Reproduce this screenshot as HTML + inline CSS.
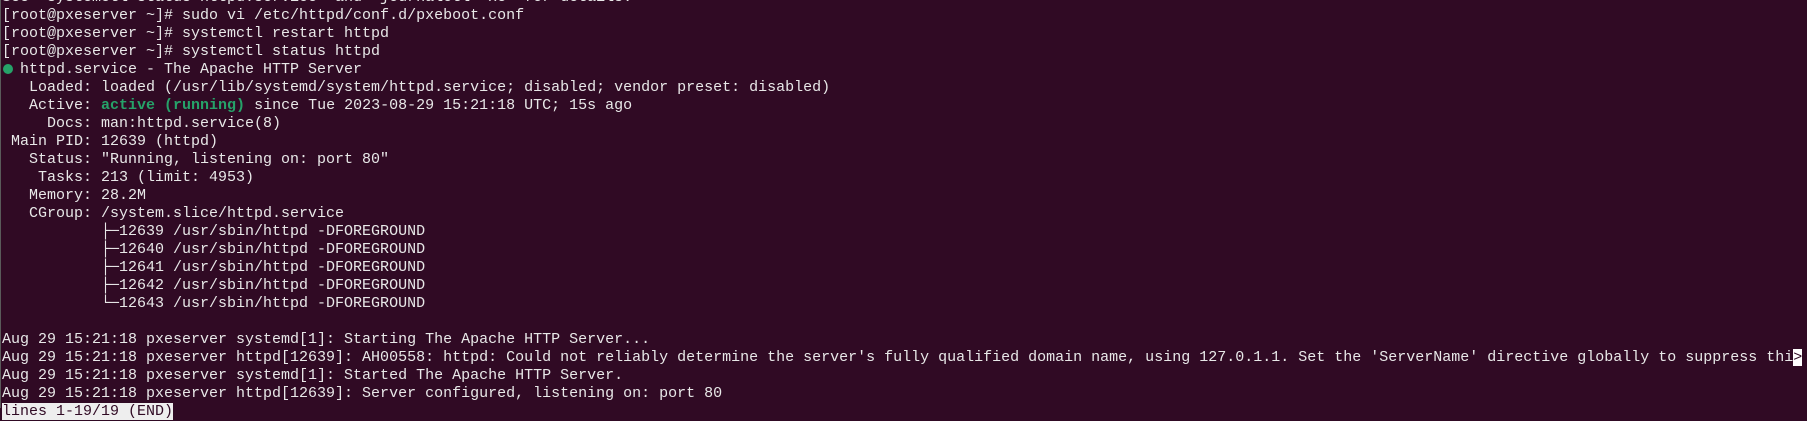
<!DOCTYPE html>
<html><head><meta charset="utf-8"><style>
html,body{margin:0;padding:0;background:#300a24;width:1807px;height:408px;overflow:hidden}
body{border-left:1px solid #5a5a5a;box-sizing:border-box}
pre{margin:0;position:absolute;left:2px;top:-11px;font-family:"Liberation Mono","DejaVu Sans Mono",monospace;font-size:15px;line-height:18px;color:#e8e8e8;white-space:pre}
.g{color:#26a269;font-weight:bold}
.dot{display:inline-block;width:10px;height:10px;border-radius:50%;background:#26a269;margin-left:1px;margin-right:-2px;vertical-align:-1px}
.cur{background:#fff;color:#300a24}
.hl{background:#eeeeee;color:#300a24}
</style></head><body><pre>See 'systemctl status httpd.service' and 'journalctl -xe' for details.
[root@pxeserver ~]# sudo vi /etc/httpd/conf.d/pxeboot.conf
[root@pxeserver ~]# systemctl restart httpd
[root@pxeserver ~]# systemctl status httpd
<span class="dot"></span> httpd.service - The Apache HTTP Server
   Loaded: loaded (/usr/lib/systemd/system/httpd.service; disabled; vendor preset: disabled)
   Active: <span class="g">active (running)</span> since Tue 2023-08-29 15:21:18 UTC; 15s ago
     Docs: man:httpd.service(8)
 Main PID: 12639 (httpd)
   Status: "Running, listening on: port 80"
    Tasks: 213 (limit: 4953)
   Memory: 28.2M
   CGroup: /system.slice/httpd.service
           ├─12639 /usr/sbin/httpd -DFOREGROUND
           ├─12640 /usr/sbin/httpd -DFOREGROUND
           ├─12641 /usr/sbin/httpd -DFOREGROUND
           ├─12642 /usr/sbin/httpd -DFOREGROUND
           └─12643 /usr/sbin/httpd -DFOREGROUND

Aug 29 15:21:18 pxeserver systemd[1]: Starting The Apache HTTP Server...
Aug 29 15:21:18 pxeserver httpd[12639]: AH00558: httpd: Could not reliably determine the server's fully qualified domain name, using 127.0.1.1. Set the 'ServerName' directive globally to suppress thi<span class="cur">&gt;</span>
Aug 29 15:21:18 pxeserver systemd[1]: Started The Apache HTTP Server.
Aug 29 15:21:18 pxeserver httpd[12639]: Server configured, listening on: port 80
<span class="hl">lines 1-19/19 (END)</span></pre></body></html>
